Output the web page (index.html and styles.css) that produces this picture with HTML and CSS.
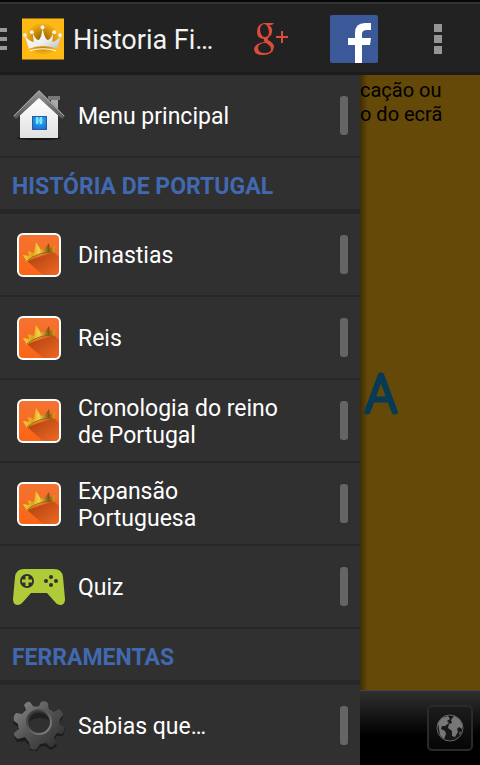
FILE: index.html
```html
<!DOCTYPE html>
<html lang="pt">
<head>
  <meta charset="UTF-8">
  <meta name="viewport" content="width=device-width, initial-scale=1.0">
  <title>Historia</title>
  <link rel="stylesheet" href="styles.css">
</head>
<body>
  <!-- Shared icon and gradients -->
  <svg class="defs" width="0" height="0" aria-hidden="true">
    <defs>
      <linearGradient id="gold" x1="0" y1="0" x2="1" y2="0">
        <stop offset="0" stop-color="#f6d03c"/>
        <stop offset="0.3" stop-color="#d9a41c"/>
        <stop offset="0.5" stop-color="#f4d544"/>
        <stop offset="0.8" stop-color="#8a5210"/>
        <stop offset="1" stop-color="#dba820"/>
      </linearGradient>
      <linearGradient id="orange" x1="0" y1="0" x2="0" y2="1">
        <stop offset="0" stop-color="#f47332"/>
        <stop offset="1" stop-color="#fb6514"/>
      </linearGradient>
      <linearGradient id="shade" x1="0" y1="0" x2="1" y2="1">
        <stop offset="0" stop-color="#a93f10"/>
        <stop offset="1" stop-color="#f06822"/>
      </linearGradient>
      <symbol id="crown" viewBox="0 0 44 44">
        <rect x="1" y="1" width="42" height="42" rx="5" fill="url(#orange)" stroke="#fff" stroke-width="2"/>
        <path d="M10 28 L37 19 L42 24 V36 Q42 42 36 42 H26 Z" fill="url(#shade)"/>
        <path d="M10 29 L6 22 L12 23 L11 18 L17 20 L19 9 L24 17 L28 15 L32 10 L33 15 L38 13 L37 20 Q22 19 10 29 Z" fill="url(#gold)"/>
        <path d="M10 28 Q21 19 36 19" fill="none" stroke="#8f6512" stroke-width="1"/>
      </symbol>
    </defs>
  </svg>

  <header class="app-bar">
    <button class="menu-btn" aria-label="Abrir menu"><span></span><span></span><span></span></button>
    <svg class="app-logo" viewBox="0 0 43 42" aria-hidden="true">
      <defs>
        <radialGradient id="glow">
          <stop offset="0" stop-color="#8a5a00"/>
          <stop offset="0.5" stop-color="#c98908"/>
          <stop offset="1" stop-color="#ffb915"/>
        </radialGradient>
        <linearGradient id="silver" x1="0" y1="0" x2="1" y2="1">
          <stop offset="0" stop-color="#fff"/>
          <stop offset="0.6" stop-color="#eee"/>
          <stop offset="1" stop-color="#bbb"/>
        </linearGradient>
      </defs>
      <rect width="43" height="42" fill="#ffb915"/>
      <ellipse cx="21" cy="21" rx="18" ry="17" fill="url(#glow)"/>
      <path d="M7 31 L3 18 Q8 24 12 24 L11 15 Q14 22 17 22 Q20 20 21 10 Q23 20 26 22 Q29 22 32 15 L31 24 Q36 23 40 18 L36 31 Q21 26 7 31 Z" fill="url(#silver)"/>
      <path d="M8 33 Q21 29 35 33" fill="none" stroke="#fff" stroke-width="1"/>
      <g fill="#f4f4f4">
        <circle cx="3" cy="17" r="2"/><circle cx="10" cy="14" r="2"/><circle cx="21" cy="9" r="2"/>
        <circle cx="33" cy="14" r="2"/><circle cx="39" cy="17" r="2"/>
      </g>
    </svg>
    <h1>Historia Fi…</h1>
    <button class="gplus-btn" aria-label="Google+">
      <svg viewBox="0 0 34 34" fill="#dd4b39" fill-rule="evenodd" aria-hidden="true">
        <path d="M10 1 H20 L18 3 H15 Q19 6 18 10 Q18 13 15 15 Q13 17 14 18 Q20 21 20 25 Q19 33 9 33 Q0 33 0 27 Q1 21 11 20 Q9 19 10 17 Q3 17 3 10 Q3 2 10 1 Z M10 2 Q6 3 6 8 Q7 16 12 15 Q15 14 15 10 Q14 2 10 2 Z M12 21 Q4 21 4 26 Q4 31 11 31 Q17 31 17 27 Q17 24 12 21 Z"/>
        <path d="M27 9 H29 V14 H34 V16 H29 V21 H27 V16 H22 V14 H27 Z"/>
      </svg>
    </button>
    <button class="facebook-btn" aria-label="Facebook">
      <svg viewBox="0 0 48 48" aria-hidden="true">
        <rect width="48" height="48" rx="2" fill="#3b5998"/>
        <path d="M25 48 V30 H18 V23 H25 V18 Q25 8 35 8 H41 V15 H37 Q32 15 32 19 V23 H41 L40 30 H32 V48 Z" fill="#fff"/>
      </svg>
    </button>
    <button class="more-btn" aria-label="Mais opções"><span></span><span></span><span></span></button>
  </header>

  <div class="layout">
    <nav class="drawer">
      <a class="item" href="#">
        <svg class="icon" viewBox="0 0 54 54" aria-hidden="true">
          <defs>
            <linearGradient id="wall" x1="0" y1="0" x2="0" y2="1">
              <stop offset="0" stop-color="#fff"/><stop offset="1" stop-color="#dfe2e0"/>
            </linearGradient>
            <radialGradient id="pane" cx="0.5" cy="0.3" r="0.8">
              <stop offset="0" stop-color="#5ce8ff"/><stop offset="0.5" stop-color="#1993e5"/><stop offset="1" stop-color="#2868ca"/>
            </radialGradient>
            <linearGradient id="roof" x1="0" y1="0" x2="0" y2="1">
              <stop offset="0" stop-color="#999"/><stop offset="1" stop-color="#555"/>
            </linearGradient>
          </defs>
          <ellipse cx="27" cy="49" rx="22" ry="2" fill="#181818"/>
          <path d="M39 10 H46 V25 H39 Z" fill="#aaa"/>
          <path d="M36 7 H48 V11 H36 Z" fill="#777"/>
          <path d="M27 8 L46 26 V49 H8 V26 Z" fill="url(#wall)"/>
          <path d="M27 1 L53 27 L50 30 L27 9 L4 30 L1 27 Z" fill="url(#roof)"/>
          <path d="M2 27 L27 2 L52 27" fill="none" stroke="#aaa" stroke-width="1"/>
          <rect x="20" y="27" width="15" height="14" fill="#3156a5"/>
          <rect x="21" y="28" width="13" height="12" fill="url(#pane)"/>
          <path d="M25 28 V35 M29 28 V35" stroke="#80e4ff" stroke-width="2"/>
        </svg>
        <span class="label">Menu principal</span>
        <span class="handle"></span>
      </a>

      <h2>HISTÓRIA DE PORTUGAL</h2>
      <a class="item" href="#">
        <svg class="icon crown"><use href="#crown"/></svg>
        <span class="label">Dinastias</span>
        <span class="handle"></span>
      </a>
      <a class="item" href="#">
        <svg class="icon crown"><use href="#crown"/></svg>
        <span class="label">Reis</span>
        <span class="handle"></span>
      </a>
      <a class="item" href="#">
        <svg class="icon crown"><use href="#crown"/></svg>
        <span class="label">Cronologia do reino de Portugal</span>
        <span class="handle"></span>
      </a>
      <a class="item" href="#">
        <svg class="icon crown"><use href="#crown"/></svg>
        <span class="label">Expansão Portuguesa</span>
        <span class="handle"></span>
      </a>
      <a class="item" href="#">
        <svg class="icon" viewBox="0 0 54 54" aria-hidden="true">
          <path d="M12 9 H42 Q50 9 51 17 L53 39 Q53 45 48 45 Q45 45 43 42 L35 33 H19 L11 42 Q9 45 6 45 Q1 45 1 39 L3 17 Q4 9 12 9 Z" fill="#b0cb38"/>
          <circle cx="15" cy="21" r="7" fill="#303030"/>
          <path d="M15 16 V26 M10 21 H20" stroke="#b0cb38" stroke-width="3"/>
          <g fill="#303030">
            <circle cx="39" cy="17" r="2"/><circle cx="34" cy="21" r="2"/>
            <circle cx="44" cy="21" r="2"/><circle cx="39" cy="25" r="2"/>
          </g>
        </svg>
        <span class="label">Quiz</span>
        <span class="handle"></span>
      </a>

      <h2>FERRAMENTAS</h2>
      <a class="item" href="#">
        <svg class="icon" viewBox="0 0 54 54" aria-hidden="true">
          <defs>
            <linearGradient id="steel" x1="0" y1="0" x2="1" y2="1">
              <stop offset="0" stop-color="#8c8c8c"/><stop offset="0.5" stop-color="#505050"/><stop offset="1" stop-color="#292929"/>
            </linearGradient>
            <linearGradient id="rim" x1="0" y1="0" x2="1" y2="1">
              <stop offset="0" stop-color="#333"/><stop offset="1" stop-color="#888"/>
            </linearGradient>
          </defs>
          <path transform="translate(0 2)" d="M12 6 L18 3 L23 7 H27 L30 2 L37 4 L38 10 L42 13 L48 10 L51 16 L48 21 V25 L53 28 L51 35 L45 35 L42 39 L45 45 L39 49 L33 45 L28 46 L25 50 L18 49 L17 44 L13 40 L5 41 L2 36 L7 31 L6 26 L1 22 L4 14 L11 15 L14 12 Z" fill="#1c1c1c"/>
          <path d="M12 6 Q15 2 18 3 L21 7 Q24 8 27 7 L29 3 Q33 1 36 4 L37 10 Q40 12 42 13 L47 10 Q50 12 51 16 L48 20 Q47 23 48 26 L52 28 Q53 32 50 35 L45 34 Q43 37 42 39 L44 44 Q42 48 38 48 L34 44 Q30 45 28 45 L25 50 Q21 52 18 49 L17 43 Q15 41 13 38 L6 40 Q2 38 2 34 L7 30 Q6 28 6 25 L2 22 Q1 17 4 14 L10 15 Q12 13 14 11 Z" fill="url(#steel)"/>
          <circle cx="27" cy="23" r="12" fill="#303030" stroke="url(#rim)" stroke-width="2"/>
          <path d="M17 23 Q18 14 27 14 Q35 14 37 21 Q25 16 17 23 Z" fill="#202020"/>
        </svg>
        <span class="label">Sabias que…</span>
        <span class="handle"></span>
      </a>
    </nav>

    <main class="page">
      <p class="hint">cação ou<br>o do ecrã</p>
      <div class="word">
        <svg viewBox="0 0 60 60"><text x="21" y="48" text-anchor="middle">A</text></svg>
      </div>
      <footer class="bottom-bar">
        <button class="globe-btn" aria-label="Mapa">
          <svg viewBox="0 0 28 28" aria-hidden="true">
            <circle cx="14" cy="14" r="13" fill="#181818" stroke="#666" stroke-width="1"/>
            <path d="M2 9 L6 4 L12 2 L14 5 L11 7 L13 9 L9 12 L6 12 L5 15 L9 17 L10 20 L8 25 L4 21 L3 15 Z" fill="#777"/>
            <path d="M15 6 L18 2 L23 5 L26 10 L26 15 L23 13 L21 15 L22 18 L19 23 L16 22 L16 17 L12 14 L13 10 L16 9 Z" fill="#777"/>
            <path d="M23 19 L25 17 L24 21 Z" fill="#777"/>
          </svg>
        </button>
      </footer>
    </main>
  </div>
</body>
</html>
```

FILE: styles.css
```css
/* General styles */
* {
  box-sizing: border-box;
}

body {
  font-family: Roboto, sans-serif;
  margin: 0;
  height: 100vh;
  display: flex;
  flex-direction: column;
  overflow: hidden;
  background: #000;
  color: #fff;
}

button {
  background: none;
  border: none;
  padding: 0;
  cursor: pointer;
}

svg {
  display: block;
  flex: none;
}

.defs {
  position: absolute;
}

/* Top bar */
.app-bar {
  flex: none;
  display: flex;
  align-items: center;
  height: 75px;
  padding: 4px 32px 0 0;
  background: #222;
  border-top: 2px solid #080808;
  border-bottom: 3px solid #1b1b1b;
  box-shadow: inset 0 2px #333;
}

.menu-btn {
  display: grid;
  gap: 5px;
  width: 7px;
  margin-right: 15px;
}

.menu-btn span {
  height: 4px;
  background: #999;
}

.app-logo {
  width: 42px;
  height: 42px;
}

.app-bar h1 {
  flex: 1;
  margin: 0 0 0 9px;
  padding-top: 2px;
  font-size: 27px;
  font-weight: 400;
  color: #f3f3f3;
  white-space: nowrap;
}

.gplus-btn svg {
  width: 34px;
  height: 34px;
}

.facebook-btn {
  margin: 0 50px 0 42px;
}

.facebook-btn svg {
  width: 48px;
  height: 48px;
}

.more-btn {
  display: grid;
  gap: 3px;
  padding: 0 6px;
}

.more-btn span {
  width: 8px;
  height: 8px;
  background: #959595;
}

/* Drawer */
.layout {
  flex: 1;
  min-height: 0;
  display: grid;
  grid-template-columns: 3fr 1fr;
}

.drawer {
  min-height: 0;
  overflow: hidden;
  background: #303030;
}

.item {
  display: flex;
  align-items: center;
  height: 83px;
  padding: 0 12px;
  border-bottom: 2px solid #272727;
  color: #fff;
  text-decoration: none;
}

.icon {
  width: 54px;
  height: 54px;
}

.icon.crown {
  padding: 5px;
}

.label {
  flex: 1;
  padding: 2px 40px 0 12px;
  font-size: 23px;
  line-height: 27px;
}

.handle {
  width: 8px;
  height: 39px;
  border-radius: 3px;
  background: #656565;
}

.drawer h2 {
  display: flex;
  align-items: center;
  height: 56px;
  margin: 0;
  padding: 6px 12px 0;
  border-bottom: 5px solid #272727;
  font-size: 23px;
  font-weight: 700;
  color: #4169b0;
}

/* Page behind the drawer */
.page {
  min-width: 0;
  display: flex;
  flex-direction: column;
  overflow: hidden;
  background: linear-gradient(to right, #3e2d05, transparent 8px) #654909;
}

.hint {
  margin: 0;
  padding-top: 3px;
  font-size: 20px;
  line-height: 24px;
  color: #000;
}

.word {
  flex: 1;
  display: flex;
  align-items: center;
  padding-bottom: 28px;
}

.word svg {
  width: 60px;
  height: 60px;
  overflow: visible;
}

.word text {
  font-family: Inter, sans-serif;
  font-size: 50px;
  font-weight: 100;
  fill: #063a56;
  stroke: #063a56;
  stroke-width: 5px;
  stroke-linejoin: round;
}

.bottom-bar {
  display: flex;
  justify-content: flex-end;
  align-items: center;
  height: 75px;
  padding-right: 7px;
  border-top: 1px solid #444;
  background: linear-gradient(#303030, #000 60%);
}

.globe-btn {
  padding: 7px;
  border: 2px solid #2a2a2a;
  border-radius: 5px;
  background: linear-gradient(#1c1c1c, #050505);
}

.globe-btn svg {
  width: 28px;
  height: 28px;
}
```
